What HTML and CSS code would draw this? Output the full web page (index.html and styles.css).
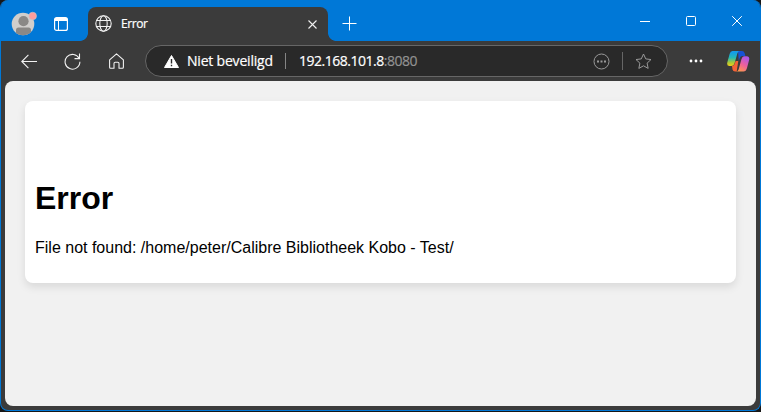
FILE: index.html
```html
<!DOCTYPE html>
<html lang="nl">
<head>
<meta charset="utf-8">
<title>Error</title>
<link rel="stylesheet" href="styles.css">
</head>
<body>
<div class="window">
  <header class="titlebar">
    <svg class="avatar" width="26" height="26" viewBox="0 0 26 26">
      <defs><clipPath id="face"><circle cx="12" cy="14" r="11.3"/></clipPath></defs>
      <circle cx="12" cy="14" r="11.3" fill="#d0cecc"/>
      <g clip-path="url(#face)" fill="#8a8886"><circle cx="12.500" cy="11.200" r="5.100"/><path d="M5 26v-6q0-2.500 2.500-2.500h10q2.500 0 2.500 2.500v6z"/></g>
      <circle cx="21.700" cy="6" r="3.800" fill="#ff9d9d" stroke="#c9c6c9" stroke-width=".6"/>
    </svg>
    <svg class="workspaces" width="14" height="14" viewBox="0 0 14 14">
      <rect x=".6" y=".6" width="12.8" height="12.8" rx="2" fill="none" stroke="#fff" stroke-width="1.2"/>
      <path d="M1 1h12v3H1zM4 3h1v10H4z" fill="#fff"/>
    </svg>
    <div class="tab">
      <svg class="globe" width="17" height="17" viewBox="0 0 17 17" fill="none" stroke="#f2f2f2" stroke-width="1.1">
        <circle cx="8.5" cy="8.5" r="7.7"/><ellipse cx="8.5" cy="8.5" rx="3.7" ry="7.7"/><path d="M1.5 5.5h14M1.5 11.5h14"/>
      </svg>
      <span class="tab-title">Error</span>
      <svg class="tab-close" width="9" height="9" viewBox="0 0 9 9" stroke="#f0f0f0" stroke-width="1.1"><path d="M.5.5l8 8M8.5.5l-8 8"/></svg>
    </div>
    <svg class="new-tab" width="15" height="15" viewBox="0 0 15 15" stroke="#fff"><path d="M.5 7.5h14M7.5.5v14"/></svg>
    <div class="controls">
      <svg width="10" height="10" viewBox="0 0 10 10" stroke="#fff"><path d="M0 5.5h10"/></svg>
      <svg width="10" height="10" viewBox="0 0 10 10" stroke="#fff" fill="none"><rect x=".5" y=".5" width="9" height="9" rx="1"/></svg>
      <svg width="10" height="10" viewBox="0 0 10 10" stroke="#fff"><path d="M.2.2l9.6 9.6M9.8.2L.2 9.8"/></svg>
    </div>
  </header>
  <nav class="toolbar">
    <svg class="back" width="16" height="15" viewBox="0 0 16 15" fill="none" stroke="#f2f2f2" stroke-width="1.1"><path d="M16 7.5H.8M7.400.9L.8 7.500l6.600 6.600"/></svg>
    <svg class="reload" width="17" height="17" viewBox="0 0 17 17" fill="none" stroke="#f2f2f2" stroke-width="1.1"><path d="M15.200 5.600A7.400 7.400 0 1 0 15.900 8.800M15.500.6v5H10.500"/></svg>
    <svg class="home" width="15" height="16" viewBox="0 0 15 16" fill="none" stroke="#f2f2f2" stroke-width="1.1" stroke-linejoin="round"><path d="M.6 6.900L7.500.8l6.900 6.100v7.400q0 1-1 1h-3.400V10.400q0-1.200-1.200-1.200H6.200q-1.200 0-1.200 1.200v4.900H1.600q-1 0-1-1z"/></svg>
    <div class="address">
      <svg class="warning" width="15" height="13" viewBox="0 0 15 13"><path d="M7.500.5L14.500 12.500H.5z" fill="#fff" stroke="#fff" stroke-linejoin="round"/><path d="M7.500 4v4.500M7.500 9.700v1.500" stroke="#292929" stroke-width="1.400"/></svg>
      <span class="security">Niet beveiligd</span>
      <i class="divider"></i>
      <span class="url">192.168.101.8<span class="port">:8080</span></span>
      <svg class="info" width="17" height="17" viewBox="0 0 17 17"><circle cx="8.500" cy="8.500" r="7.500" fill="none" stroke="#999"/><path d="M4 7.500h2v2H4zM7.500 7.500h2v2h-2zM11 7.500h2v2h-2z" fill="#999"/></svg>
      <i class="divider action-divider"></i>
      <svg class="star" width="17" height="17" viewBox="0 0 17 17" fill="none" stroke="#999" stroke-linejoin="round"><path d="M8.500 1l2.250 4.900 5.250.65-3.900 3.600 1.050 5.250L8.500 12.800l-4.650 2.600 1.050-5.250L1 6.550l5.250-.65z"/></svg>
    </div>
    <svg class="more" width="14" height="4" viewBox="0 0 14 4" fill="#fff"><circle cx="2" cy="2" r="1.400"/><circle cx="7" cy="2" r="1.400"/><circle cx="12" cy="2" r="1.400"/></svg>
    <svg class="copilot" width="23" height="21" viewBox="0 0 23 21">
      <defs>
        <linearGradient id="cool" x1="0" y1="0" x2="0" y2="1"><stop offset=".1" stop-color="#159de8"/><stop offset=".45" stop-color="#25b9b5"/><stop offset=".75" stop-color="#a4c83c"/><stop offset="1" stop-color="#f2cf16"/></linearGradient>
        <linearGradient id="warm" x1=".7" y1="0" x2=".2" y2="1"><stop stop-color="#aa57ec"/><stop offset=".5" stop-color="#ed609c"/><stop offset="1" stop-color="#ff9b48"/></linearGradient>
      </defs>
      <path d="M11 0h4q2 0 2.600 2l.8 3h-3q-2 0-2.600 2l-1 3z" fill="#1752d4"/>
      <path d="M5.500 0H13q-2 0-2.600 2.200L7.500 12.500Q6.700 15 4.200 15H2.500Q-.5 15 .3 11.500L2.600 3Q3.400 0 5.500 0z" fill="url(#cool)"/>
      <path d="M5 15q2 0 2.600-2l1-3h2.700l-1.600 10.500H8q-2 0-2.500-2z" fill="#f56236"/>
      <path d="M17 5.200h2.500q3.500 0 2.600 3.800L20 17q-1 3.500-3.500 3.500H9q2 0 2.600-2L14.500 8q.8-2.800 2.500-2.800z" fill="url(#warm)"/>
    </svg>
  </nav>
  <main class="viewport">
    <section class="card">
      <h1>Error</h1>
      <p>File not found: /home/peter/Calibre Bibliotheek Kobo - Test/</p>
    </section>
  </main>
</div>
</body>
</html>
```
FILE: styles.css
```css
* { box-sizing: border-box; }
html { height: 100%; background: #171717; }
body { margin: 0; height: 412px; overflow: hidden; font-family: "Liberation Sans", Arial, sans-serif; }
svg { display: block; flex: none; }
.window {
  height: 411px;
  border: solid #0078d7;
  border-width: 0 1px 1px;
  border-radius: 8px;
  overflow: hidden;
  background: #3b3b3b;
}
.titlebar {
  display: flex;
  height: 41px;
  background: #0078d7;
}
.avatar { margin: 10px 0 0 10px; }
.workspaces { margin: 17px 0 0 17px; }
.tab {
  position: relative;
  display: flex;
  width: 240px;
  height: 34px;
  margin: 7px 0 0 20px;
  border-radius: 8px 8px 0 0;
  background: #3b3b3b;
}
.tab::before, .tab::after {
  content: "";
  position: absolute;
  bottom: 0;
  width: 8px;
  height: 8px;
}
.tab::before { left: -8px; background: radial-gradient(circle at 0 0, transparent 7.5px, #3b3b3b 8.2px); }
.tab::after { right: -8px; background: radial-gradient(circle at 100% 0, transparent 7.5px, #3b3b3b 8.2px); }
.globe { margin: 8px 0 0 7px; }
.tab-title {
  margin: 9px 0 0 9px;
  color: #fff;
  font: 12px/16px "Open Sans", sans-serif;
  letter-spacing: -.45px;
  -webkit-text-stroke: .2px;
}
.tab-close { margin: 13px 11px 0 auto; }
.new-tab { margin: 16px 0 0 14px; }
.controls { display: flex; gap: 36px; margin: 16px 18px 0 auto; }
.toolbar {
  display: flex;
  align-items: center;
  height: 40px;
}
.back { margin-left: 20px; }
.reload { margin-left: 27px; }
.home { margin-left: 28px; }
.address {
  display: flex;
  align-items: center;
  width: 523px;
  height: 32px;
  margin-left: 21px;
  border: 1px solid #666;
  border-radius: 16px;
  background: #292929;
  color: #fff;
  font: 14px/20px "Open Sans", sans-serif;
  white-space: nowrap;
}
.warning { margin-left: 18px; }
.security { width: 85px; margin-left: 8px; letter-spacing: -.2px; -webkit-text-stroke: .2px; }
.divider { width: 1px; height: 16px; margin-left: 13px; background: #858585; }
.url { margin-left: 13px; letter-spacing: -.48px; -webkit-text-stroke: .2px; }
.port { color: #929292; }
.info { margin-left: auto; }
.action-divider { height: 18px; margin-left: 12px; background: #666; }
.star { margin: 0 15px 0 12px; }
.more { margin-left: 21px; }
.copilot { margin-left: 24px; }
.viewport {
  height: 325px;
  margin: 0 4px;
  padding: 20px;
  border-radius: 8px;
  background: #f1f1f1;
}
.card {
  height: 182px;
  padding: 79px 10px 0;
  border-radius: 8px;
  background: #fff;
  box-shadow: 0 4px 8px rgba(0, 0, 0, .1);
  color: #000;
}
h1 { margin: 0; font-size: 32px; line-height: 37px; }
p { margin: 22px 0 0; font-size: 16px; line-height: 18px; }
```
